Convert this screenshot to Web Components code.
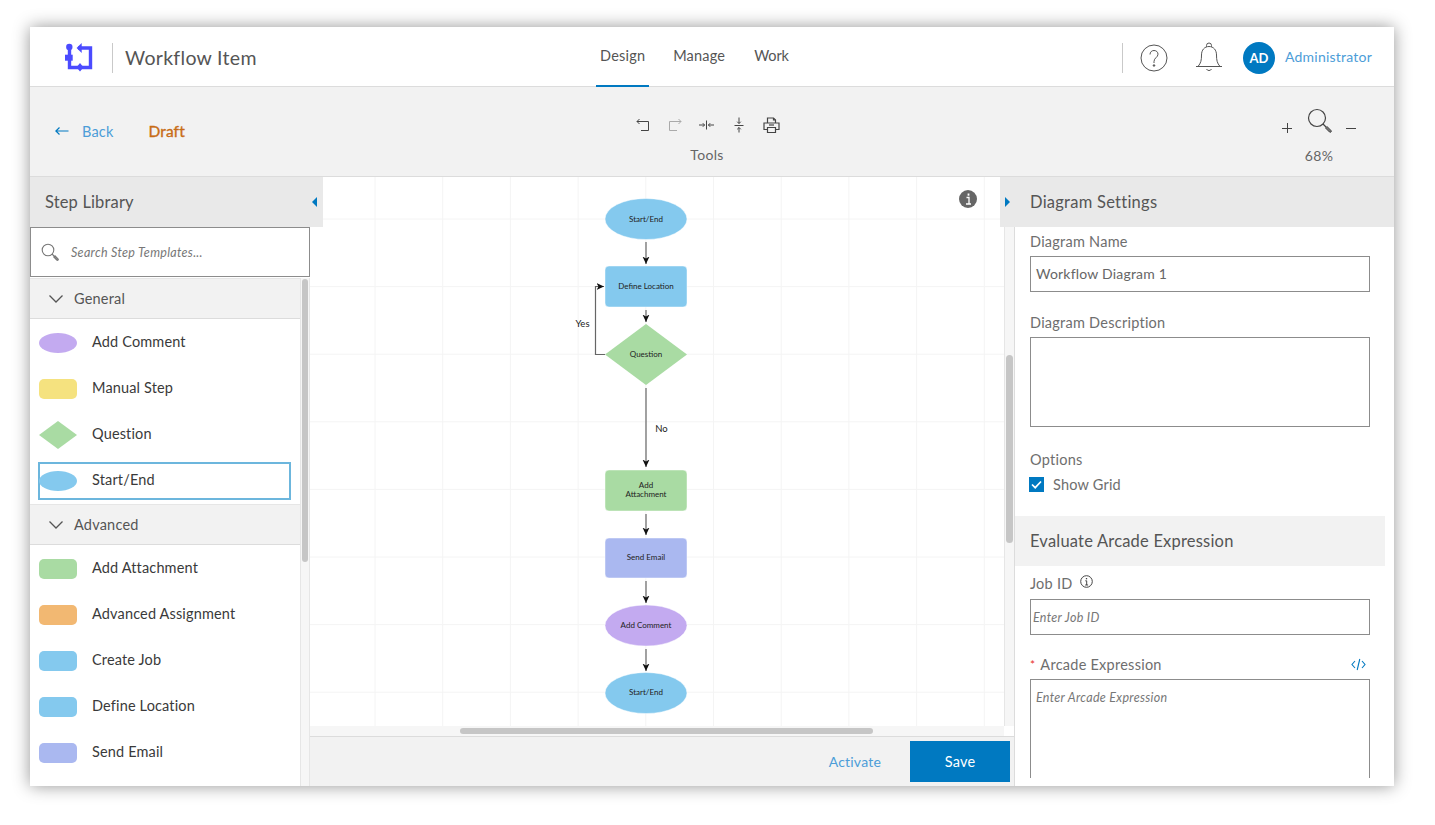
<!DOCTYPE html>
<html lang="en">
<head>
<meta charset="utf-8">
<title>Workflow Item</title>
<style>
  html, body { margin: 0; padding: 0; height: 100%; background: #fff; overflow: hidden; }
  body { font-family: Lato, "Open Sans", sans-serif; color: #555; padding: 27px 41px 39px 30px; box-sizing: border-box; }
</style>
</head>
<body>
<workflow-app></workflow-app>

<script>
const ICONS = {
  logo: `<svg width="30" height="30" viewBox="0 0 30 30" fill="none" stroke="#4b4bff" stroke-width="3.400"><circle cx="5.300" cy="4" r="3.200" fill="#4b4bff" stroke="none"/><path d="M5.500 4V24.500H16"/><rect x="1" y="11.700" width="7.700" height="6" fill="#4b4bff" stroke="none"/><path d="M14 5H26.500V24.500H16"/><path d="M12.600 5L17.700 0V10Z" fill="#4b4bff" stroke="none"/><path d="M16 20L19.500 24.300L16 28.600L12.500 24.300Z" fill="#4b4bff" stroke="none"/></svg>`,
  undo: `<svg width="16" height="16" viewBox="0 0 16 16" fill="none" stroke="currentColor" stroke-width="1"><path d="M2 4.500H13.500V13.500H6"/><path d="M4.500 2L2 4.500L4.500 7"/></svg>`,
  redo: `<svg width="16" height="16" viewBox="0 0 16 16" fill="none" stroke="currentColor" stroke-width="1"><path d="M14 4.500H2.500V13.500H10"/><path d="M11.500 2L14 4.500L11.500 7"/></svg>`,
  colH: `<svg width="16" height="16" viewBox="0 0 16 16" fill="none" stroke="currentColor" stroke-width="1"><path d="M7.500 3.500V12.500"/><path d="M0 8H5.500M3.800 6.200L5.600 8L3.800 9.800"/><path d="M15 8H9.500M11.200 6.200L9.400 8L11.200 9.800"/></svg>`,
  colV: `<svg width="16" height="16" viewBox="0 0 16 16" fill="none" stroke="currentColor" stroke-width="1"><path d="M3.500 8.500H12.500"/><path d="M8 0.500V6.500M6.200 4.700L8 6.500L9.800 4.700"/><path d="M8 15.500V10.500M6.200 12.300L8 10.500L9.800 12.300"/></svg>`,
  print: `<svg width="17" height="17" viewBox="0 0 17 17" fill="none" stroke="currentColor" stroke-width="1.200"><path d="M4.500 6V1H10.500L12.500 3V6"/><path d="M10.500 1V3H12.500"/><path d="M4 12.500H1V6H16V12.500H13"/><path d="M4.500 10.500H12.500V15.500H4.500Z"/><path d="M6 8H11"/></svg>`,
  help: `<svg width="28" height="28" viewBox="0 0 28 28" fill="none" stroke="#555" stroke-width="1"><circle cx="14" cy="14" r="13"/><path d="M10 10.500C10 8 11.800 6.500 14 6.500C16.400 6.500 18 8.100 18 10.200C18 13.400 14 13.800 14 17.500V19"/><circle cx="14" cy="21.500" r="0.800" fill="#555"/></svg>`,
  bell: `<svg width="28" height="30" viewBox="0 0 28 30" fill="none" stroke="#555" stroke-width="1"><path d="M1 24.500H27"/><path d="M3 24.500C6 21 6.500 18 6.500 13C6.500 8 9.500 4.500 14 4.500C18.500 4.500 21.500 8 21.500 13C21.500 18 22 21 25 24.500"/><path d="M11.500 4.800V3.500A2.500 2.500 0 0 1 16.500 3.500V4.800"/><path d="M11.500 27A2.800 2.800 0 0 0 16.500 27"/></svg>`,
  zoom: `<svg width="26" height="26" viewBox="0 0 26 26" fill="none" stroke="#444" stroke-width="1.200"><circle cx="10" cy="10" r="8.500"/><path d="M16 16L19 19"/><path d="M18.500 20L20 18.500L24 22.500A1 1 0 0 1 22.500 24Z" fill="#777" stroke-width="1"/></svg>`,
  plus: `<svg width="10" height="10" viewBox="0 0 10 10" fill="none" stroke="#444" stroke-width="1"><path d="M0 5.500H10M5.500 0V10"/></svg>`,
  minus: `<svg width="10" height="10" viewBox="0 0 10 10" fill="none" stroke="#444" stroke-width="1"><path d="M0 5.500H10"/></svg>`,
  search: `<svg width="18" height="18" viewBox="0 0 18 18" fill="none" stroke="#777" stroke-width="1.100"><circle cx="7" cy="7" r="5.800"/><path d="M11 11L13 13"/><path d="M12.800 14L14 12.800L17 15.800A0.800 0.800 0 0 1 15.800 17Z" fill="#999"/></svg>`,
  chevron: `<svg width="14" height="8" viewBox="0 0 14 8" fill="none" stroke="#555" stroke-width="1.300"><path d="M0.500 0.500L7 7L13.500 0.500"/></svg>`,
  info: `<svg width="13" height="13" viewBox="0 0 13 13" fill="none" stroke="#444" stroke-width="1"><circle cx="6.500" cy="6.500" r="5.800"/><path d="M5.300 5.800H6.700V10M5.200 10H8.100"/><path d="M6.500 3V4.300" stroke-width="1.300"/></svg>`,
  code: `<svg width="15" height="13" viewBox="0 0 15 13" fill="none" stroke="#0079c1" stroke-width="1.100"><path d="M4 3L1 6.500L4 10"/><path d="M11 3L14 6.500L11 10"/><path d="M8.800 1L6.200 12"/></svg>`
};

function define(name, css, html) {
  customElements.define(name, class extends HTMLElement {
    constructor() {
      super();
      this.attachShadow({ mode: 'open' });
    }
    connectedCallback() {
      this.shadowRoot.innerHTML = `<style>${css}</style>${typeof html === 'function' ? html(this) : html}`;
    }
  });
}

define('app-header', `
  :host { display: flex; align-items: stretch; height: 59px; background: #fff; border-bottom: 1px solid #dcdcdc; }
  .brand { width: 566px; display: flex; align-items: center; padding-left: 34px; box-sizing: border-box; flex: none; }
  .brand svg { display: block; margin-top: 3px; }
  .sep { width: 1px; height: 30px; background: #c9c9c9; }
  .brand .sep { margin: 2px 12px 0 18px; }
  h1 { font: 400 19.500px Lato, sans-serif; color: #555; margin: 2px 0 0; letter-spacing: .3px; }
  nav { display: flex; gap: 21px; }
  nav a { font-size: 14.500px; color: #555; padding: 0 4px 2px; display: flex; align-items: center; box-sizing: border-box; border-bottom: 2px solid transparent; letter-spacing: .2px; margin-bottom: -1px; height: 60px; }
  nav a:last-child { letter-spacing: -.1px; }
  nav a.on { border-bottom-color: #0079c1; margin-right: -1px; }
  .right { margin-left: auto; display: flex; align-items: center; padding-right: 22px; }
  .right svg { display: block; }
  .right .sep { margin: 2px 17px 0 0; }
  .help { margin: 2px 27px 0 0; }
  .bell { margin: 0 20px 0 0; }
  .avatar { width: 32px; height: 32px; border-radius: 50%; background: #0079c1; color: #fff; font-weight: 700; font-size: 13px; display: flex; align-items: center; justify-content: center; margin-top: 2px; }
  .user { font-size: 14px; color: #4c9dd8; margin-left: 10px; letter-spacing: .22px; }
`, `
  <div class="brand">${ICONS.logo}<div class="sep"></div><h1>Workflow Item</h1></div>
  <nav><a class="on">Design</a><a>Manage</a><a>Work</a></nav>
  <div class="right">
    <div class="sep"></div>
    <div class="help">${ICONS.help}</div>
    <div class="bell">${ICONS.bell}</div>
    <div class="avatar">AD</div>
    <span class="user">Administrator</span>
  </div>
`);

define('tool-bar', `
  :host { display: flex; height: 89px; background: #f2f2f2; border-bottom: 1px solid #dcdcdc; }
  .left { width: 590px; flex: none; display: flex; align-items: center; padding: 0 0 1px 25px; box-sizing: border-box; }
  .arrow { color: #0079c1; margin-right: 13px; display: block; }
  .back { color: #4c9dd8; font-size: 14.500px; letter-spacing: .2px; }
  .draft { color: #c86c16; font-size: 15.500px; font-weight: 400; -webkit-text-stroke: .35px #c86c16; margin-left: 35px; letter-spacing: .1px; }
  .tools { width: 174px; flex: none; text-align: center; padding-top: 30px; box-sizing: border-box; }
  .icons { display: flex; justify-content: center; gap: 16px; height: 17px; color: #444; margin-bottom: 12px; }
  .icons svg { display: block; }
  .icons .off { color: #aaa; }
  .cap { font-size: 14px; color: #666; letter-spacing: .3px; }
  .zoom { margin-left: auto; margin-right: 38px; width: 74px; text-align: center; padding-top: 19px; box-sizing: border-box; }
  .zrow { display: flex; align-items: flex-end; justify-content: space-between; height: 28px; margin-bottom: 13px; }
  .zrow > svg { display: block; margin-bottom: 1px; }
  .zrow span svg { display: block; }
  .zrow span { margin-left: 2px; }
`, `
  <div class="left">
    <svg class="arrow" width="14" height="10" viewBox="0 0 14 10" fill="none" stroke="currentColor" stroke-width="1.200"><path d="M0.500 5H13.500M4.500 1.500L0.800 5L4.500 8.500"/></svg>
    <span class="back">Back</span>
    <span class="draft">Draft</span>
  </div>
  <div class="tools">
    <div class="icons"><span>${ICONS.undo}</span><span class="off">${ICONS.redo}</span><span>${ICONS.colH}</span><span>${ICONS.colV}</span><span>${ICONS.print}</span></div>
    <div class="cap">Tools</div>
  </div>
  <div class="zoom">
    <div class="zrow">${ICONS.plus}<span>${ICONS.zoom}</span>${ICONS.minus}</div>
    <div class="cap">68%</div>
  </div>
`);

define('step-item', `
  :host { display: block; height: 46px; padding: 5px 9px 3px 8px; box-sizing: border-box; }
  .row { height: 38px; display: flex; align-items: center; box-sizing: border-box; border: 2px solid transparent; color: #3a3a3a; font-size: 14.500px; letter-spacing: .15px; }
  :host([selected]) .row { border-color: #6cb6dd; }
  svg { display: block; width: 38px; height: 30px; margin: 0 15px 0 -1px; flex: none; }
  span { margin-top: -4px; }
`, el => {
  const fill = el.getAttribute('color');
  const shapes = {
    ellipse: `<ellipse cx="19" cy="15" rx="19" ry="10" fill="${fill}"/>`,
    rect: `<rect x="0" y="5" width="38" height="20" rx="5" fill="${fill}"/>`,
    diamond: `<path d="M19 1L38 15L19 29L0 15Z" fill="${fill}"/>`
  };
  return `<div class="row"><svg viewBox="0 0 38 30">${shapes[el.getAttribute('shape')]}</svg><span><slot></slot></span></div>`;
});

define('step-group', `
  :host { display: block; }
  .head { height: 41px; background: #f2f2f2; border-bottom: 1px solid #dcdcdc; border-top: 1px solid #e6e6e6; box-sizing: border-box; display: flex; align-items: center; padding-left: 19px; font-size: 14.500px; color: #555; letter-spacing: .2px; }
  .head svg { display: block; margin-right: 11px; }
`, el => `<div class="head">${ICONS.chevron}<span>${el.getAttribute('label')}</span></div><slot></slot>`);

define('step-library', `
  :host { display: flex; flex-direction: column; min-height: 0; position: relative; z-index: 2; background: #fff; }
  .title { height: 50px; width: 293px; background: #e9e9e9; display: flex; align-items: center; padding: 0 6px 0 15px; box-sizing: border-box; font-size: 16.500px; color: #555; letter-spacing: .15px; flex: none; }
  .tri { margin-left: auto; width: 0; height: 0; border: 5px solid transparent; border-right: 5px solid #0079c1; border-left: 0; }
  .search { height: 50px; border: 1px solid #8c8c8c; display: flex; align-items: center; padding-left: 10px; box-sizing: border-box; font-size: 12.500px; font-style: italic; color: #777; flex: none; margin-bottom: 1px; background: #fff; letter-spacing: .3px; }
  .search svg { display: block; margin-right: 12px; }
  .body { flex: 1; min-height: 0; display: flex; overflow: hidden; }
  .list { width: 270px; flex: none; }
  .bar { flex: 1; background: #f6f6f6; border-left: 1px solid #e6e6e6; border-right: 1px solid #e6e6e6; padding: 1px 1px 0; box-sizing: border-box; }
  .thumb { height: 283px; background: #c6c6c6; border-radius: 4px; }
`, `
  <div class="title"><span>Step Library</span><i class="tri"></i></div>
  <div class="search">${ICONS.search}<span>Search Step Templates...</span></div>
  <div class="body">
    <div class="list">
      <step-group label="General">
        <step-item shape="ellipse" color="#c3aaf0">Add Comment</step-item>
        <step-item shape="rect" color="#f5e27f">Manual Step</step-item>
        <step-item shape="diamond" color="#a9dba3">Question</step-item>
        <step-item shape="ellipse" color="#84c9ee" selected>Start/End</step-item>
      </step-group>
      <step-group label="Advanced" style="margin-top:1px">
        <step-item shape="rect" color="#a9dba3">Add Attachment</step-item>
        <step-item shape="rect" color="#f2b872">Advanced Assignment</step-item>
        <step-item shape="rect" color="#84c9ee">Create Job</step-item>
        <step-item shape="rect" color="#84c9ee">Define Location</step-item>
        <step-item shape="rect" color="#aab8f0">Send Email</step-item>
      </step-group>
    </div>
    <div class="bar"><div class="thumb"></div></div>
  </div>
`);

define('flow-canvas', `
  :host { display: grid; grid-template-columns: 1fr 10px; grid-template-rows: 1fr 10px; min-height: 0; background: #fff; overflow: hidden; }
  svg { display: block; width: 694px; height: 549px; overflow: hidden; }
  svg text { font-family: Lato, sans-serif; font-size: 8px; fill: #222; text-anchor: middle; }
  svg text.lbl { font-size: 9.500px; }
  .grid { stroke: #f4f4f4; stroke-width: 1; fill: none; }
  .edge { stroke: #666; stroke-width: 1.200; fill: none; marker-end: url(#head); }
  .node { stroke: rgba(255,255,255,.45); stroke-width: 1; }
  .v { background: #f6f6f6; border-left: 1px solid #e6e6e6; margin-top: 50px; padding: 128px 1px 0 1px; }
  .v div { height: 188px; background: #c6c6c6; border-radius: 4px; }
  .h { background: #f6f6f6; padding: 2px 0 0 150px; box-sizing: border-box; }
  .h div { height: 6px; width: 413px; background: #c6c6c6; border-radius: 3px; }
  .corner { background: #fff; }
`, () => {
  let grid = '';
  for (let i = 0; i < 10; i++) grid += `M${375 + i * 67.700} 177V726`;
  for (let i = 0; i < 8; i++) grid += `M310 ${219 + i * 67.600}H1004`;
  const edge = (d) => `<path class="edge" d="${d}"/>`;
  return `
  <svg viewBox="310 177 694 549">
    <defs><marker id="head" markerUnits="userSpaceOnUse" markerWidth="9" markerHeight="9" refX="7.500" refY="4.500" orient="auto"><path d="M0 1L7.500 4.500L0 8L2 4.500Z" fill="#111"/></marker></defs>
    <path class="grid" d="${grid}"/>
    ${edge('M646 242V264')}${edge('M646 310V322')}${edge('M646 388V467')}${edge('M646 514V535')}${edge('M646 581V603')}${edge('M646 649V671')}
    ${edge('M605 354.500H595.500V286.500H604')}
    <ellipse class="node" cx="646" cy="219" rx="41" ry="20.500" fill="#84c9ee"/>
    <text x="646" y="222">Start/End</text>
    <rect class="node" x="605" y="266" width="82" height="41" rx="4" fill="#84c9ee"/>
    <text x="646" y="289">Define Location</text>
    <path d="M646 324L687 354.500L646 385L605 354.500Z" fill="#a9dba3"/>
    <text x="646" y="357">Question</text>
    <rect class="node" x="605" y="470" width="82" height="41" rx="4" fill="#a9dba3"/>
    <text x="646" y="487.500">Add</text><text x="646" y="497">Attachment</text>
    <rect class="node" x="605" y="538" width="82" height="40" rx="4" fill="#aab8f0"/>
    <text x="646" y="560">Send Email</text>
    <ellipse class="node" cx="646" cy="625.500" rx="41" ry="20.500" fill="#c3aaf0"/>
    <text x="646" y="628">Add Comment</text>
    <ellipse class="node" cx="646" cy="693" rx="41" ry="20.500" fill="#84c9ee"/>
    <text x="646" y="695">Start/End</text>
    <text class="lbl" x="582.500" y="327">Yes</text>
    <text class="lbl" x="661.500" y="431.500">No</text>
    <circle cx="968" cy="199" r="9" fill="#666"/>
    <path d="M966.500 197.500H969V204M966 204H971" stroke="#fff" stroke-width="1.300" fill="none"/>
    <path d="M968.500 193.500V195.700" stroke="#fff" stroke-width="1.800"/>
  </svg>
  <div class="v"><div></div></div>
  <div class="h"><div></div></div>
  <div class="corner"></div>
`});

define('action-bar', `
  :host { display: flex; align-items: center; justify-content: flex-end; height: 50px; background: #f2f2f2; border-top: 1px solid #dcdcdc; box-sizing: border-box; padding: 0 4px 0 0; }
  a { color: #4c9dd8; font-size: 14px; margin-right: 29px; letter-spacing: .2px; }
  button { width: 100px; height: 41px; border: 0; background: #0079c1; color: #fff; font: 14.500px Lato, sans-serif; padding: 0; letter-spacing: .2px; }
`, `<a>Activate</a><button>Save</button>`);

define('form-field', `
  :host { display: block; margin-bottom: var(--mb, 20px); }
  label { display: flex; align-items: center; width: 340px; box-sizing: border-box; height: 20px; font-size: 14.500px; color: #6e6e6e; letter-spacing: .25px; margin-bottom: var(--lg, 5px); padding-right: 4px; }
  .req { color: #e8302a; margin-right: 5px; font-size: 12px; }
  .info { margin-left: 7px; display: block; height: 13px; margin-top: -3px; }
  .info svg, .code svg { display: block; }
  .code { margin-left: auto; }
  .box { width: 340px; height: var(--h, 36px); border: 1px solid #8c8c8c; box-sizing: border-box; font-size: 14px; color: #666; padding: 0 5px 1px; display: flex; align-items: center; letter-spacing: .2px; }
  .box.ph { font-size: 12.500px; font-style: italic; color: #777; padding: 0 2px; letter-spacing: .3px; }
  .box.area { align-items: flex-start; padding: 10px 5px; }
`, el => {
  const ph = el.getAttribute('placeholder');
  const val = el.getAttribute('value') || ph || '';
  const cls = ['box', ph ? 'ph' : '', el.hasAttribute('area') ? 'area' : ''].join(' ');
  return `<label>${el.hasAttribute('required') ? '<span class="req">*</span>' : ''}<span>${el.getAttribute('label')}</span>${el.hasAttribute('info') ? `<span class="info">${ICONS.info}</span>` : ''}${el.hasAttribute('code') ? `<span class="code">${ICONS.code}</span>` : ''}</label><div class="${cls}">${val}</div>`;
});

define('settings-panel', `
  :host { display: flex; flex-direction: column; min-height: 0; background: #fff; position: relative; z-index: 2; padding-bottom: 8px; box-sizing: border-box; }
  .title { height: 50px; margin-left: -15px; background: #e9e9e9; display: flex; align-items: center; padding-left: 5px; font-size: 16.500px; color: #555; letter-spacing: .25px; flex: none; }
  .tri { width: 0; height: 0; border: 5px solid transparent; border-left: 5px solid #0079c1; border-right: 0; margin-right: 20px; }
  .scroll { flex: 1; min-height: 0; overflow: hidden; padding: 4px 0 0 15px; }
  .opt { font-size: 14.500px; color: #6e6e6e; height: 20px; line-height: 20px; letter-spacing: .25px; }
  .chk { display: flex; align-items: center; height: 20px; margin: 4px 0 22px -1px; font-size: 14.500px; color: #6e6e6e; letter-spacing: .2px; }
  .chk i { width: 15px; height: 15px; background: #0079c1; margin-right: 9px; display: block; }
  .chk svg { display: block; }
  h3 { margin: 0 9px 7px -15px; height: 50px; background: #f2f2f2; font-weight: 400; font-size: 16.500px; color: #555; display: flex; align-items: center; padding-left: 15px; letter-spacing: .2px; }
`, `
  <div class="title"><i class="tri"></i><span>Diagram Settings</span></div>
  <div class="scroll">
    <form-field label="Diagram Name" value="Workflow Diagram 1"></form-field>
    <form-field label="Diagram Description" area style="--h:90px;--mb:23px"></form-field>
    <div class="opt">Options</div>
    <div class="chk"><i><svg width="15" height="15" viewBox="0 0 15 15" fill="none" stroke="#fff" stroke-width="1.700"><path d="M3 7.500L6.200 10.700L12 4.500"/></svg></i><span>Show Grid</span></div>
    <h3>Evaluate Arcade Expression</h3>
    <form-field label="Job ID" info placeholder="Enter Job ID" style="--lg:6px;--mb:19px"></form-field>
    <form-field label="Arcade Expression" required code area placeholder="Enter Arcade Expression" style="--h:200px"></form-field>
  </div>
`);

define('workflow-app', `
  :host { display: flex; flex-direction: column; width: 1364px; height: 759px; background: #fff; box-shadow: 0 0 16px rgba(0,0,0,.42); overflow: hidden; }
  main { flex: 1; min-height: 0; display: grid; grid-template-columns: 280px 705px 379px; }
  .center { display: grid; grid-template-rows: 559px 50px; min-height: 0; min-width: 0; border-right: 1px solid #dcdcdc; }
`, `
  <app-header></app-header>
  <tool-bar></tool-bar>
  <main>
    <step-library></step-library>
    <div class="center"><flow-canvas></flow-canvas><action-bar></action-bar></div>
    <settings-panel></settings-panel>
  </main>
`);
</script>
</body>
</html>
